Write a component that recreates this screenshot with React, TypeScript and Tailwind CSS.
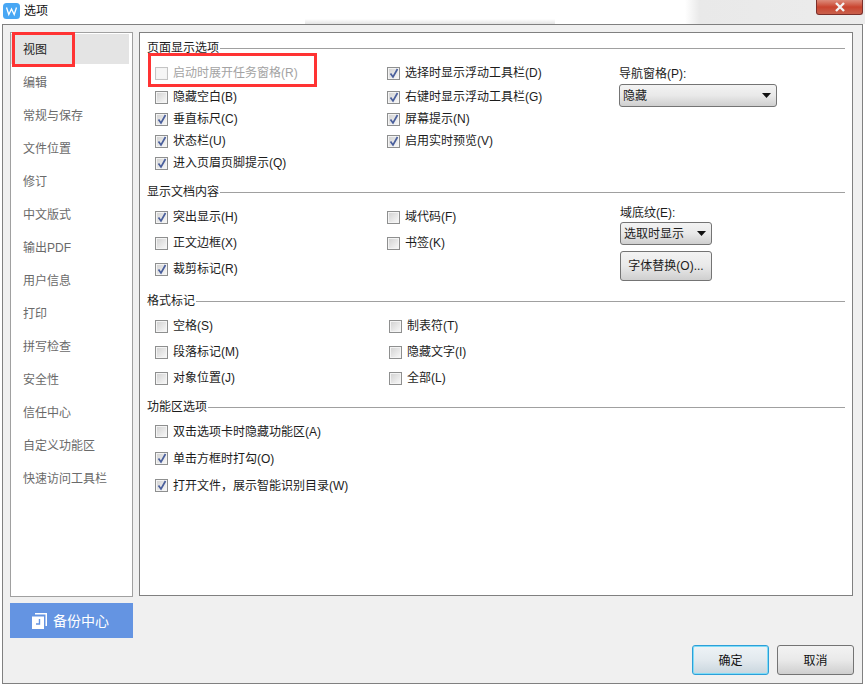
import React from 'react';

const FONT = "font-['Liberation_Sans','Noto_Sans_CJK_SC',sans-serif]";

const NAV_ITEMS = [
  '视图', '编辑', '常规与保存', '文件位置', '修订', '中文版式', '输出PDF',
  '用户信息', '打印', '拼写检查', '安全性', '信任中心', '自定义功能区', '快速访问工具栏',
];

interface Opt {
  label: string;
  checked?: boolean;
  disabled?: boolean;
}

function CheckRow({ label, checked, disabled }: Opt) {
  return (
    <div className="flex items-center gap-[5px]">
      <div className={`relative w-[13px] h-[13px] shrink-0 border ${disabled ? 'border-[#c4c4c4] bg-[#f6f6f6]' : 'border-[#8e8f8f] bg-gradient-to-br from-[#d0d0d0] to-[#fafafa]'}`}>
        <div className="w-full h-full border border-[#f4f4f4]" />
        {checked && (
          <svg className="absolute left-[1px] top-0" width="10" height="11" viewBox="0 0 10 11">
            <path d="M1.5 5.5 L4 9 L8.5 1" fill="none" stroke="#4a5f9c" strokeWidth="1.7" />
          </svg>
        )}
      </div>
      <span className={`text-[12px] leading-none whitespace-nowrap ${disabled ? 'text-[#a3a3a3]' : 'text-[#1c1c1c]'}`}>{label}</span>
    </div>
  );
}

function Legend({ title }: { title: string }) {
  return (
    <div className="flex items-center gap-[1px] h-[16px]">
      <span className="text-[12px] leading-none text-[#1c1c1c] whitespace-nowrap">{title}</span>
      <div className="flex-1 h-px bg-[#a0a0a0]" />
    </div>
  );
}

function Column({ items, rowClass, widthClass }: { items: Opt[]; rowClass: string; widthClass: string }) {
  return (
    <div className={`flex flex-col ${widthClass}`}>
      {items.map((it) => (
        <div key={it.label} className={`flex items-center ${rowClass}`}>
          <CheckRow {...it} />
        </div>
      ))}
    </div>
  );
}

function Arrow() {
  return (
    <svg width="9" height="5" viewBox="0 0 9 5">
      <polygon points="0,0 9,0 4.5,5" fill="#111" />
    </svg>
  );
}

function Select({ value, widthClass }: { value: string; widthClass: string }) {
  return (
    <div className={`flex items-center justify-between h-[23px] pl-[3px] pr-[5px] border border-[#747474] rounded-[3px] bg-gradient-to-b from-[#f3f3f3] via-[#e9e9e9] to-[#cfcfcf] text-[12px] leading-none text-[#1c1c1c] ${widthClass}`}>
      <span>{value}</span>
      <Arrow />
    </div>
  );
}

export default function App() {
  return (
    <div className={`relative w-[865px] h-[686px] bg-white overflow-hidden ${FONT}`}>
      {/* title bar */}
      <div className="flex h-[24px]">
        <div className="flex items-center flex-1 pl-[3px] pb-[5px] pt-[2px]">
          <svg width="17" height="16" viewBox="0 0 17 16">
            <rect x="0" y="0" width="17" height="16" rx="3.5" fill="#48a7f4" />
            <polyline points="3.5,4.5 5.8,11.5 8.5,6 11.2,11.5 13.5,4.5" fill="none" stroke="#fff" strokeWidth="1.3" />
          </svg>
          <span className="ml-[4px] text-[12px] leading-none text-[#111]">选项</span>
        </div>
        <div className="flex justify-end items-start w-[180px] pr-[2px] bg-gradient-to-r from-white via-[#e9e9e9] via-[8%] to-[#ececec]">
          <div className="flex items-center justify-center w-[47px] h-[15px] border border-t-0 border-[#7c2f2a] rounded-b-[3px] bg-gradient-to-b from-[#dc8b7b] via-[#c9442f] to-[#c9604c]">
            <svg width="12" height="10" viewBox="0 0 12 10">
              <path d="M2 1 L10 9 M10 1 L2 9" stroke="#f4f4f4" strokeWidth="2.4" />
            </svg>
          </div>
        </div>
      </div>

      {/* dialog */}
      <div className="ml-[2px] w-[861px] h-[660px] border border-[#808080] bg-[#f0f0f0] pl-[7px] pt-[7px]">
        <div className="flex gap-[6px] items-start">
          <div className="w-[123px] h-[565px] border border-[#a0a0a0] bg-white pt-px pr-[3px]">
            <div className="flex flex-col gap-[3px]">
              {NAV_ITEMS.map((item, i) => (
                <div
                  key={item}
                  className={`flex items-center h-[30px] pl-[12px] pt-[2px] text-[12px] leading-none ${i === 0 ? 'bg-[#e4e4e4] text-[#1c1c1c]' : 'text-[#6a6a6a]'}`}
                >
                  {item}
                </div>
              ))}
            </div>
          </div>

          <div className="w-[714px] h-[564px] border border-[#808080] bg-white px-[7px] pt-[7px]">
            <section className="h-[144px]">
              <Legend title="页面显示选项" />
              <div className="flex pl-[8px] pt-[6px]">
                <Column
                  widthClass="w-[232px]"
                  rowClass="h-[22px] first:h-[24px] first:pb-[2px]"
                  items={[
                    { label: '启动时展开任务窗格(R)', disabled: true },
                    { label: '隐藏空白(B)' },
                    { label: '垂直标尺(C)', checked: true },
                    { label: '状态栏(U)', checked: true },
                    { label: '进入页眉页脚提示(Q)', checked: true },
                  ]}
                />
                <Column
                  widthClass="w-[232px]"
                  rowClass="h-[22px] first:h-[24px] first:pb-[2px]"
                  items={[
                    { label: '选择时显示浮动工具栏(D)', checked: true },
                    { label: '右键时显示浮动工具栏(G)', checked: true },
                    { label: '屏幕提示(N)', checked: true },
                    { label: '启用实时预览(V)', checked: true },
                  ]}
                />
                <div className="flex flex-col">
                  <div className="flex items-center h-[22px] pt-[2px] text-[12px] leading-none text-[#1c1c1c]">导航窗格(P):</div>
                  <Select value="隐藏" widthClass="w-[158px]" />
                </div>
              </div>
            </section>

            <section className="h-[109px]">
              <Legend title="显示文档内容" />
              <div className="flex pl-[8px] pt-[4px]">
                <Column
                  widthClass="w-[232px]"
                  rowClass="h-[26px]"
                  items={[
                    { label: '突出显示(H)', checked: true },
                    { label: '正文边框(X)' },
                    { label: '裁剪标记(R)', checked: true },
                  ]}
                />
                <Column
                  widthClass="w-[233px]"
                  rowClass="h-[26px]"
                  items={[{ label: '域代码(F)' }, { label: '书签(K)' }]}
                />
                <div className="flex flex-col">
                  <div className="flex items-center h-[18px] text-[12px] leading-none text-[#1c1c1c]">域底纹(E):</div>
                  <Select value="选取时显示" widthClass="w-[92px]" />
                  <div className="flex items-center justify-center w-[92px] h-[30px] mt-[6px] border border-[#747474] rounded-[3px] bg-gradient-to-b from-[#f3f3f3] via-[#e9e9e9] to-[#cfcfcf] text-[12px] leading-none text-[#1c1c1c]">
                    字体替换(O)...
                  </div>
                </div>
              </div>
            </section>

            <section className="h-[106px]">
              <Legend title="格式标记" />
              <div className="flex pl-[8px] pt-[4px]">
                <Column
                  widthClass="w-[234px]"
                  rowClass="h-[26px]"
                  items={[{ label: '空格(S)' }, { label: '段落标记(M)' }, { label: '对象位置(J)' }]}
                />
                <Column
                  widthClass="w-[232px]"
                  rowClass="h-[26px]"
                  items={[{ label: '制表符(T)' }, { label: '隐藏文字(I)' }, { label: '全部(L)' }]}
                />
              </div>
            </section>

            <section>
              <Legend title="功能区选项" />
              <div className="pl-[8px] pt-[3px]">
                <Column
                  widthClass="w-[400px]"
                  rowClass="h-[27px]"
                  items={[
                    { label: '双击选项卡时隐藏功能区(A)' },
                    { label: '单击方框时打勾(O)', checked: true },
                    { label: '打开文件，展示智能识别目录(W)', checked: true },
                  ]}
                />
              </div>
            </section>
          </div>
        </div>

        {/* footer */}
        <div className="flex justify-between items-start w-[844px] mt-[6px]">
          <div className="flex items-center w-[123px] h-[35px] pl-[22px] gap-[6px] bg-[#6494e2] text-[14px] leading-none text-white">
            <svg width="15" height="16" viewBox="0 0 15 16">
              <path d="M3 0 H15 V13 H13.5 V1.5 H3 Z" fill="#fff" />
              <path d="M0 3.5 H12 V16 H0 Z" fill="#fff" />
              <path d="M7.5 6 V11 H4" fill="none" stroke="#6494e2" strokeWidth="1.4" />
            </svg>
            <span>备份中心</span>
          </div>
          <div className="flex gap-[8px] mt-[42px]">
            <div className="flex items-center justify-center w-[77px] h-[30px] pt-[2px] border border-[#2d9fd8] rounded-[3px] bg-gradient-to-b from-[#eef3f6] via-[#e2e9ee] to-[#c9d6de] shadow-[inset_0_0_0_1px_#7fdcf7] text-[12px] leading-none text-[#111]">
              确定
            </div>
            <div className="flex items-center justify-center w-[77px] h-[30px] pt-[2px] border border-[#747474] rounded-[3px] bg-gradient-to-b from-[#f3f3f3] via-[#e9e9e9] to-[#cfcfcf] text-[12px] leading-none text-[#111]">
              取消
            </div>
          </div>
        </div>
      </div>

      {/* faint shadow of the window behind */}
      <div className="absolute left-[305px] top-[19px] w-[250px] h-[5px] bg-gradient-to-b from-white to-[#e4e4e4]" />

      {/* red annotation boxes */}
      <div className="absolute left-[12px] top-[32px] w-[63px] h-[35px] border-[3px] border-[#ff3333]" />
      <div className="absolute left-[148px] top-[53px] w-[169px] h-[34px] border-[3px] border-[#ff3333]" />
    </div>
  );
}
